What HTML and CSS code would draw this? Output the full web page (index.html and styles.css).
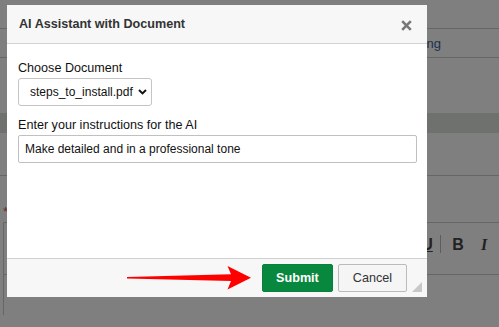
FILE: index.html
```html
<!DOCTYPE html>
<html lang="en">
  <head>
    <meta charset="UTF-8" />
    <meta name="viewport" content="width=device-width, initial-scale=1.0" />
    <title>AI Assistant with Document</title>
    <link rel="stylesheet" href="styles.css">
  </head>
  <body>
    <div class="page">
      <div class="topbar"></div>
      <div class="nav">
        <span>Home</span>
        <span>Templates</span>
        <span>Setting</span>
      </div>
      <div class="section-gap"></div>
      <div class="band"></div>
      <div class="section"></div>
      <div class="field-label"><span class="required">*</span> Content</div>
      <div class="editor">
        <div class="toolbar">
          <span class="tool underline">U</span>
          <span class="tool-sep"></span>
          <span class="tool bold">B</span>
          <span class="tool italic">I</span>
        </div>
        <div class="editor-area"></div>
      </div>
    </div>

    <div class="backdrop"></div>

    <div class="modal">
      <div class="modal-header">
        <span class="modal-title">AI Assistant with Document</span>
        <button class="close-btn" title="Close">
          <svg width="11" height="11" viewBox="0 0 11 11">
            <path d="M1.2 1.2 L9.8 9.8 M9.8 1.2 L1.2 9.8" stroke="#777" stroke-width="2.6" fill="none" />
          </svg>
        </button>
      </div>
      <div class="modal-body">
        <label for="doc">Choose Document</label>
        <div class="select-wrap">
          <select id="doc">
            <option>steps_to_install.pdf</option>
          </select>
          <svg class="chevron" width="9" height="6" viewBox="0 0 9 6">
            <path d="M1 1 L4.5 4.5 L8 1" stroke="#111" stroke-width="1.9" fill="none" />
          </svg>
        </div>
        <label for="instructions">Enter your instructions for the AI</label>
        <input id="instructions" type="text" value="Make detailed and in a professional tone">
      </div>
      <div class="modal-footer">
        <button class="btn btn-submit">Submit</button>
        <button class="btn btn-cancel">Cancel</button>
        <span class="resize-grip"></span>
      </div>
    </div>

    <!-- annotation arrow -->
    <svg class="arrow" width="140" height="36" viewBox="120 260 140 36">
      <polygon points="127,276.9 231,274.3 227.5,266 251,277.7 227.5,289.4 231,281.1 127,278.5" fill="#ff0000" />
    </svg>
  </body>
</html>
```

FILE: styles.css
```css
body {
  margin: 0;
  background-color: #fff;
  font-family: "Liberation Sans", Arial, sans-serif;
  font-size: 12.6px;
  color: #111;
  overflow: hidden;
}

/* page behind the dialog */
.topbar {
  box-sizing: border-box;
  height: 29px;
  border-bottom: 1px solid #ccc;
}
.nav {
  box-sizing: border-box;
  height: 29px;
  border-bottom: 1px solid #ccc;
  display: flex;
  align-items: center;
  justify-content: flex-end;
  gap: 24px;
  padding-right: 58px;
  font-size: 13px;
  color: #3d6598;
}
.section-gap {
  height: 55px;
}
.band {
  height: 20px;
  background-color: #dee2de;
}
.section {
  box-sizing: border-box;
  height: 43px;
  border-bottom: 1px solid #ccc;
}
.field-label {
  margin-top: 28px;
  padding-left: 3px;
  line-height: 15px;
  font-size: 13px;
  color: #333;
}
.required {
  color: #d9534f;
}
.editor {
  margin: 3px 0 0 3px;
  border: 1px solid #ccc;
  border-right: none;
  border-bottom: none;
}
.toolbar {
  box-sizing: border-box;
  height: 52px;
  border-bottom: 1px solid #ccc;
  display: flex;
  align-items: flex-start;
  justify-content: flex-end;
  padding: 11px 2px 0 0;
  color: #444;
}
.tool {
  width: 26px;
  height: 21px;
  line-height: 21px;
  text-align: center;
  font-size: 16px;
  font-weight: bold;
}
.underline {
  text-decoration: underline;
}
.italic {
  font-family: "Liberation Serif", "Times New Roman", serif;
  font-style: italic;
}
.tool-sep {
  width: 1px;
  height: 18px;
  margin: 1px 4px 0 0;
  background-color: #bbb;
}
.editor-area {
  height: 40px;
}

.backdrop {
  position: fixed;
  inset: 0;
  background-color: rgba(0, 0, 0, 0.5);
}

/* dialog */
.modal {
  position: fixed;
  left: 7px;
  top: 5px;
  width: 420px;
  height: 292px;
  background-color: #fff;
  display: flex;
  flex-direction: column;
}
.modal-header {
  box-sizing: border-box;
  height: 39px;
  background-color: #f7f7f7;
  border-bottom: 1px solid #d2d2d2;
  display: flex;
  align-items: center;
  justify-content: space-between;
  padding: 0 15px 0 12px;
}
.modal-title {
  font-weight: bold;
  color: #333;
}
.close-btn {
  border: none;
  background: none;
  padding: 0;
  margin-top: 2px;
  display: flex;
}
.modal-body {
  flex: 1;
  padding: 17px 10px 0 11px;
}
.modal-body label {
  display: block;
  line-height: 15px;
  margin-bottom: 2px;
}
.select-wrap {
  position: relative;
  width: 134px;
  margin-bottom: 12px;
}
.select-wrap select {
  appearance: none;
  box-sizing: border-box;
  width: 134px;
  height: 28px;
  padding: 0 12px 0 11px;
  border: 1px solid #c4c4c4;
  border-radius: 3px;
  background-color: #fff;
  font-family: inherit;
  font-size: 12px;
  color: #111;
}
.chevron {
  position: absolute;
  right: 5px;
  top: 11px;
  pointer-events: none;
}
.modal-body input {
  box-sizing: border-box;
  width: 100%;
  height: 28px;
  padding: 0 6px;
  border: 1px solid #c0c0c0;
  border-radius: 2px;
  font-family: inherit;
  font-size: 12px;
  color: #111;
}
.modal-footer {
  position: relative;
  background-color: #f7f7f7;
  border-top: 1px solid #d2d2d2;
  display: flex;
  justify-content: flex-end;
  gap: 5px;
  padding: 5px 20px;
}
.btn {
  box-sizing: border-box;
  height: 28px;
  border-radius: 2px;
  font-family: inherit;
  font-size: 12.6px;
  cursor: pointer;
}
.btn-submit {
  padding: 0 13px;
  border: 1px solid #07813b;
  background-color: #08883e;
  color: #fff;
  font-weight: bold;
}
.btn-cancel {
  padding: 0 14px;
  border: 1px solid #bbb;
  background-color: #f5f5f5;
  color: #333;
}
.resize-grip {
  position: absolute;
  right: 5px;
  bottom: 5px;
  width: 0;
  height: 0;
  border-left: 10px solid transparent;
  border-bottom: 10px solid #c8c8c8;
}

.arrow {
  position: fixed;
  left: 120px;
  top: 260px;
}
```
